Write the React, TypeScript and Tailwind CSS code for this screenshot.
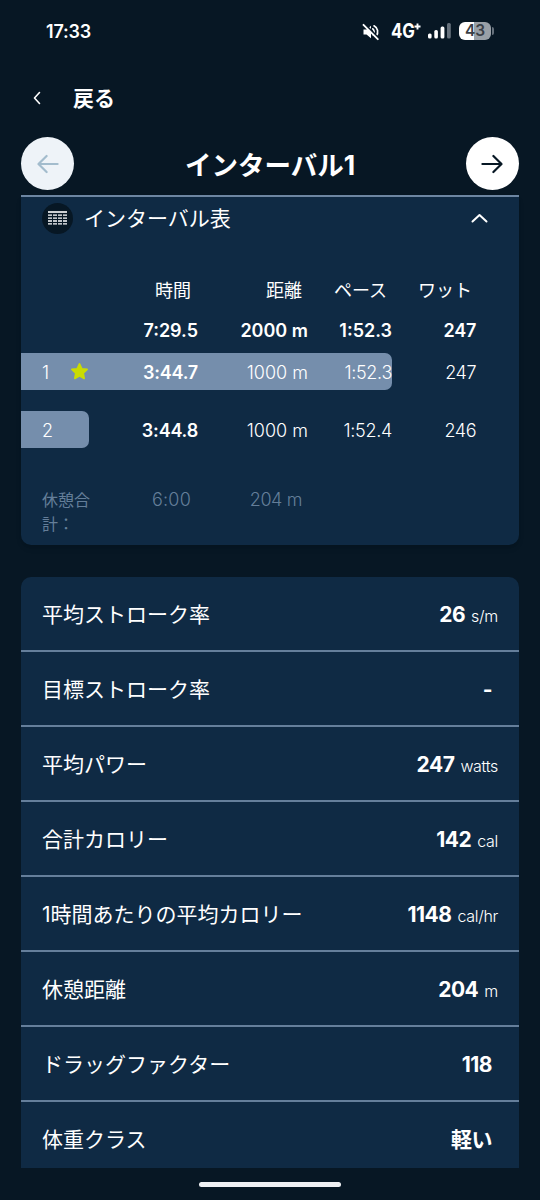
//App.tsx
import type { ReactNode } from 'react';

type Interval = {
    id: number;
    time: string;
    distance: string;
    pace: string;
    watts: string;
    best?: boolean;
    bar: number;
};

type Stat = {
    label: string;
    value: string;
    unit?: string;
};

const intervals: Interval[] = [
    { id: 1, time: '3:44.7', distance: '1000 m', pace: '1:52.3', watts: '247', best: true, bar: 371 },
    { id: 2, time: '3:44.8', distance: '1000 m', pace: '1:52.4', watts: '246', bar: 67.5 },
];

const stats: Stat[] = [
    { label: '平均ストローク率', value: '26', unit: 's/m' },
    { label: '目標ストローク率', value: '-' },
    { label: '平均パワー', value: '247', unit: 'watts' },
    { label: '合計カロリー', value: '142', unit: 'cal' },
    { label: '1時間あたりの平均カロリー', value: '1148', unit: 'cal/hr' },
    { label: '休憩距離', value: '204', unit: 'm' },
    { label: 'ドラッグファクター', value: '118' },
    { label: '体重クラス', value: '軽い' },
];

const StatusBar = () => (
    <div className="flex h-[62px] shrink-0 items-center justify-between pl-[46px] pr-[46px]">
        <span className="text-[18px] font-semibold tracking-[-0.2px]">17:33</span>
        <div className="flex items-center">
            <svg width="18" height="18" viewBox="0 0 18 18" className="mr-[11px] mt-[2px]" fill="none">
                <path d="M1.5 6.5h3L9 2.8v12.4l-4.5-3.7h-3z" fill="white" />
                <path d="M10.8 5.8c1.6 1.5 1.7 4.2.4 6M12 2.8c3.9 2 4.8 6.7 2.2 10.2" stroke="white" strokeWidth="1.7" strokeLinecap="round" />
                <path d="M2.8 1.2 17 15.4" stroke="#071724" strokeWidth="2" />
                <path d="M1.5 1.8 15.8 16.2" stroke="white" strokeWidth="1.9" strokeLinecap="round" />
            </svg>
            <span className="inline-block w-[23px] origin-left scale-x-[0.84] text-[20px] font-bold leading-6">4G</span>
            <svg width="7" height="7" viewBox="0 0 7 7" className="-mt-[9px] mr-[7px]">
                <path d="M3.5 .5v6M.5 3.5h6" stroke="white" strokeWidth="1.9" />
            </svg>
            <svg width="23" height="16" viewBox="0 0 23 16" className="mr-[8px]">
                <rect x="0" y="10.5" width="3.6" height="5" rx="1.5" fill="white" />
                <rect x="6.3" y="7" width="3.6" height="8.5" rx="1.5" fill="white" />
                <rect x="12.6" y="3.5" width="3.8" height="12" rx="1.5" fill="white" />
                <rect x="19" y="0" width="3.8" height="15.5" rx="1.5" fill="#66717c" />
            </svg>
            <div className="flex h-[18px] w-[32px] items-center justify-center rounded-[6px] bg-linear-to-r from-white from-46% to-[#99a0a7] to-46% text-[15.5px] font-semibold leading-none text-[#3a3f46]">
                43
            </div>
            <div className="ml-px h-[8px] w-[2px] rounded-r-full bg-[#66717c]" />
        </div>
    </div>
);

const Arrow = ({ back = false }: { back?: boolean }) => (
    <div className={`flex size-[52.5px] items-center justify-center rounded-full ${back ? 'bg-[#eef3f8] text-[#a3bccd]' : 'bg-white text-[#071724]'}`}>
        <svg width="22" height="20" viewBox="0 0 22 20" fill="none" stroke="currentColor" strokeWidth="2.2" strokeLinecap="round" strokeLinejoin="round" className={back ? 'ml-[2px] rotate-180' : 'mr-[2px]'}>
            <path d="M1.4 10h19M12.4 2l8.1 8-8.100 8" />
        </svg>
    </div>
);

const TableIcon = () => (
    <div className="flex size-[31px] items-center justify-center rounded-full bg-[#071724]">
        <svg width="19" height="14" viewBox="0 0 19 14">
            <path d="M0 1h19" stroke="white" strokeWidth="1.6" />
            <path d="M0 4.2h19M0 7.1h19M0 10h19M0 12.9h19" stroke="white" strokeWidth="1.3" strokeDasharray="4 1" />
        </svg>
    </div>
);

const Row = ({ children, className = '' }: { children: ReactNode; className?: string }) => (
    <div className={`relative grid grid-cols-[79px_77px_110px_84px_85px] items-center pl-[21px] text-right ${className}`}>
        {children}
    </div>
);

const IntervalRow = ({ item }: { item: Interval }) => (
    <Row className="h-[37px] text-[18px]">
        <div className="absolute inset-y-0 left-0 rounded-r-[7px] bg-[#758eac]" style={{ width: item.bar }} />
        <div className="relative flex items-center text-left">
            <span className="w-[28px] pt-px font-light">{item.id}</span>
            {item.best && (
                <svg width="19" height="19" viewBox="0 0 20 20" fill="#cbdc00" stroke="#cbdc00" strokeWidth="1.8" strokeLinejoin="round">
                    <path d="m10 2 2.4 5.1 5.6.7-4.1 3.9 1 5.6-4.9-2.7-4.9 2.7 1-5.6L2 7.8l5.6-.7z" />
                </svg>
            )}
        </div>
        <span className="relative pt-px font-semibold tracking-[-0.2px]">{item.time}</span>
        <span className="relative pt-px font-light">{item.distance}</span>
        <span className="relative pt-px font-light tracking-[-0.3px]">{item.pace}</span>
        <span className="relative pr-px pt-px font-light tracking-[-0.5px]">{item.watts}</span>
    </Row>
);

const IntervalTable = () => (
    <div className="h-[350px] shrink-0 rounded-b-[10px] border-t-2 border-[#6d86a2] bg-[#0f2a44] shadow-md">
        <div className="flex h-[42px] items-center pl-[21px] pr-[31px]">
            <TableIcon />
            <span className="ml-[11px] pt-[2px] text-[21px]">インターバル表</span>
            <svg width="17" height="10" viewBox="0 0 17 10" fill="none" stroke="white" strokeWidth="2" strokeLinecap="round" strokeLinejoin="round" className="ml-auto">
                <path d="m1.5 8.500 7-6.500 7 6.500" />
            </svg>
        </div>
        <Row className="mt-[37px] h-[28px] text-[18px]">
            <span />
            <span className="pr-[7px]">時間</span>
            <span className="pr-[6px]">距離</span>
            <span className="pr-[5px]">ペース</span>
            <span className="pr-[5px]">ワット</span>
        </Row>
        <Row className="mt-[8px] h-[36px] text-[18px] font-semibold">
            <span />
            <span>7:29.5</span>
            <span>2000 m</span>
            <span>1:52.3</span>
            <span className="pr-px tracking-[-0.3px]">247</span>
        </Row>
        <div className="mt-[5px] flex flex-col gap-[21px]">
            {intervals.map((item) => (
                <IntervalRow key={item.id} item={item} />
            ))}
        </div>
        <Row className="mt-[40px] !items-start text-[18px] text-[#647e99]">
            <span className="w-[52px] text-left text-[16px] leading-6">休憩合計：</span>
            <span className="pr-[7px] font-light leading-[23px] tracking-[0.2px]">6:00</span>
            <span className="pr-[6px] font-light leading-[23px] tracking-[-0.4px]">204 m</span>
        </Row>
    </div>
);

const StatRow = ({ stat }: { stat: Stat }) => (
    <div className="flex h-[75px] shrink-0 items-center justify-between border-b-2 border-[#657f9b] px-[21px] pt-[2px]">
        <span className="text-[21px]">{stat.label}</span>
        <div className="flex items-baseline gap-[6px]">
            <span className="text-[21px] font-bold tracking-[-0.5px]">{stat.value}</span>
            <span className="text-[16px] font-light tracking-[-0.3px]">{stat.unit}</span>
        </div>
    </div>
);

const App = () => {
    return (
        <div className="flex h-[1200px] w-[540px] flex-col overflow-hidden bg-[#071724] font-[Inter,'Noto_Sans_CJK_JP',sans-serif] text-white">
            <StatusBar />
            <div className="flex h-[72px] shrink-0 items-center pl-[33px]">
                <svg width="8" height="14" viewBox="0 0 8 14" fill="none" stroke="white" strokeWidth="1.6" strokeLinecap="round" strokeLinejoin="round">
                    <path d="M6.5 1.500 1.500 7l5 5.500" />
                </svg>
                <span className="ml-[32px] pt-[2px] text-[21px] font-bold">戻る</span>
            </div>
            <div className="flex min-h-0 flex-1 flex-col px-[21px]">
                <div className="flex h-[61px] shrink-0 items-center justify-between pb-[2px]">
                    <Arrow back />
                    <h1 className="pt-[5px] text-[26.5px] font-bold">インターバル1</h1>
                    <Arrow />
                </div>
                <IntervalTable />
                <div className="mt-[32px] flex min-h-0 flex-1 flex-col overflow-hidden rounded-t-[10px] bg-[#0f2a44]">
                    {stats.map((stat) => (
                        <StatRow key={stat.label} stat={stat} />
                    ))}
                </div>
            </div>
            <div className="flex h-[32px] shrink-0 items-center justify-center">
                <div className="h-[5px] w-[142px] rounded-full bg-[#eef0f3]" />
            </div>
        </div>
    );
};

export default App;
